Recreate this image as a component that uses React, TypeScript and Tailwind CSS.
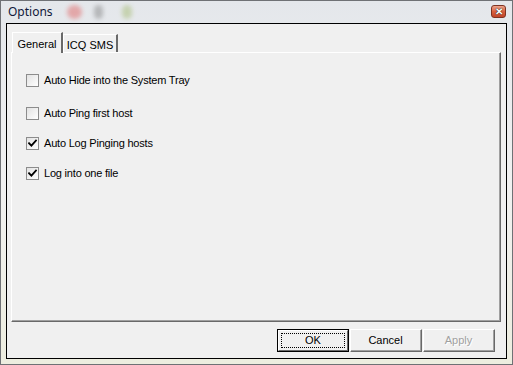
import React from 'react'

const labels = [
  { text: 'Auto Hide into the System Tray', checked: false, mt: 'mt-[21px]' },
  { text: 'Auto Ping first host', checked: false, mt: 'mt-[20px]' },
  { text: 'Auto Log Pinging hosts', checked: true, mt: 'mt-[17px]' },
  { text: 'Log into one file', checked: true, mt: 'mt-[17px]' },
]

function CheckBox({ checked }: { checked: boolean }) {
  return (
    <span className="w-[13px] h-[13px] border border-[#8c8c8c] bg-gradient-to-br from-[#e2e2e2] to-white flex items-center justify-center shrink-0">
      {checked && (
        <svg width="9" height="9" viewBox="0 0 9 9">
          <path d="M1 4.2 L3.4 6.6 L8 1.6" stroke="#000" strokeWidth="1.8" fill="none" strokeLinecap="square" />
        </svg>
      )}
    </span>
  )
}

// classic 3d push button
function Btn({ children, isDefault, disabled }: { children: React.ReactNode; isDefault?: boolean; disabled?: boolean }) {
  if (isDefault) {
    return (
      <div className="w-[72px] h-[23px] border border-black">
        <div className="w-full h-full border-t border-l border-t-white border-l-white border-r border-b border-r-[#696969] border-b-[#696969] p-[2px]">
          <div className="w-full h-full border border-dotted border-black flex items-center justify-center text-[11px] text-black">
            {children}
          </div>
        </div>
      </div>
    )
  }
  return (
    <div className="w-[72px] h-[23px] border-t border-l border-t-white border-l-white border-r border-b border-r-[#696969] border-b-[#696969]">
      <div className="w-full h-full border-r border-b border-r-[#a0a0a0] border-b-[#a0a0a0] flex items-center justify-center text-[11px]">
        {disabled ? (
          <span className="text-[#a0a0a0] [text-shadow:1px_1px_0_#fff]">{children}</span>
        ) : (
          <span className="text-black">{children}</span>
        )}
      </div>
    </div>
  )
}

export default function App() {
  return (
    <div
      className="w-[513px] h-[365px] border border-[#6f7175] bg-gradient-to-b from-[#e4e7eb] via-[#f1f1f1] to-[#ededdf] flex flex-col"
      style={{ fontFamily: '"Liberation Sans", Arial, sans-serif' }}
    >
      {/* title bar */}
      <div className="h-[22px] flex items-center pl-[7px] pr-[6px] shrink-0">
        <span className="text-[12px] text-[#10183a]" style={{ fontFamily: '"Noto Sans", "Open Sans", sans-serif' }}>
          Options
        </span>
        <span className="ml-[14px] w-[15px] h-[14px] rounded-full bg-[#e05a5a] opacity-45 blur-[2px]" />
        <span className="ml-[12px] w-[9px] h-[14px] rounded-full bg-[#707070] opacity-40 blur-[2px]" />
        <span className="ml-[19px] w-[10px] h-[14px] rounded-full bg-[#98b25a] opacity-40 blur-[2px]" />
        <div className="flex-1" />
        <div className="w-[15px] h-[13px] mt-[-1px] rounded-[3px] border border-[#7d3322] bg-gradient-to-b from-[#eca48c] via-[#d9603f] to-[#c2452a] flex items-center justify-center">
          <span className="text-[10px] leading-none font-bold text-white [text-shadow:0_0_1px_#222,0_0_1px_#222]">✕</span>
        </div>
      </div>

      {/* client area */}
      <div className="flex-1 ml-[5px] mr-[5px] mb-[5px] border border-black bg-[#f0f0f0] flex flex-col">
        {/* tabs */}
        <div className="flex items-end pl-[5px] pt-[8px] h-[28px] shrink-0">
          <div className="relative z-10 w-[51px] h-[21px] mb-[-1px] bg-[#f0f0f0] border-t border-l border-t-white border-l-white border-r-2 border-r-[#696969] flex items-start justify-center pt-[3px] text-[11px] text-black">
            General
          </div>
          <div className="w-[55px] h-[18px] border-t border-l border-t-white border-l-white border-r-2 border-r-[#696969] flex items-start justify-center pt-[2px] text-[11px] text-black">
            ICQ SMS
          </div>
        </div>

        {/* tab page */}
        <div className="ml-[4px] w-[490px] h-[270px] border-t border-l border-t-white border-l-white border-r border-b border-r-[#696969] border-b-[#696969] shrink-0">
          <div className="w-full h-full border-r border-b border-r-[#a0a0a0] border-b-[#a0a0a0] flex flex-col pl-[14px]">
            {labels.map(l => (
              <div key={l.text} className={`flex items-center h-[13px] ${l.mt}`}>
                <CheckBox checked={l.checked} />
                <span className="ml-[5px] text-[11px] tracking-[-0.2px] text-black leading-none">{l.text}</span>
              </div>
            ))}
          </div>
        </div>

        {/* buttons */}
        <div className="flex justify-end gap-[1px] pr-[11px] mt-[7px]">
          <Btn isDefault>OK</Btn>
          <Btn>Cancel</Btn>
          <Btn disabled>Apply</Btn>
        </div>
      </div>
    </div>
  )
}
